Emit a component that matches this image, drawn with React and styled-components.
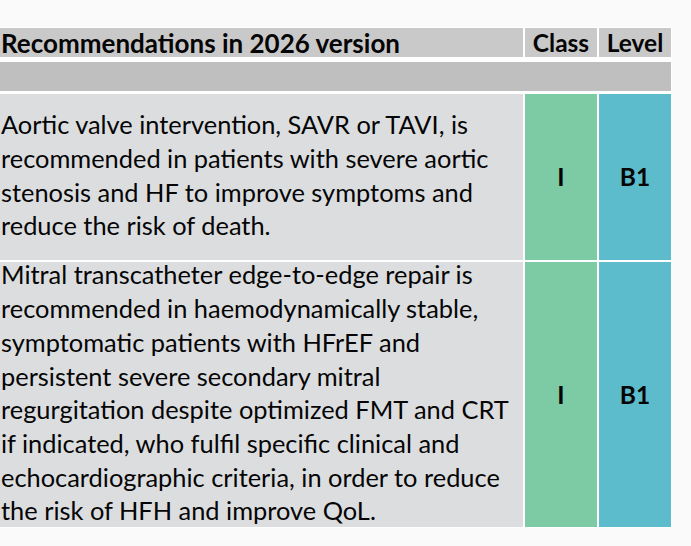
import React from 'react'
import styled, { createGlobalStyle } from 'styled-components'

const GlobalStyle = createGlobalStyle`
  html, body {
    margin: 0;
    padding: 0;
    background: #fafafa;
  }
  body {
    font-family: Lato, "Open Sans", "Liberation Sans", sans-serif;
    color: #050505;
  }
`

const rows = [
  {
    text: [
      'Aortic valve intervention, SAVR or TAVI, is',
      'recommended in patients with severe aortic',
      'stenosis and HF to improve symptoms and',
      'reduce the risk of death.',
    ],
    cls: 'I',
    level: 'B1',
    height: 165.5,
  },
  {
    text: [
      'Mitral transcatheter edge-to-edge repair is',
      'recommended in haemodynamically stable,',
      'symptomatic patients with HFrEF and',
      'persistent severe secondary mitral',
      'regurgitation despite optimized FMT and CRT',
      'if indicated, who fulfil specific clinical and',
      'echocardiographic criteria, in order to reduce',
      'the risk of HFH and improve QoL.',
    ],
    cls: 'I',
    level: 'B1',
    height: 265.5,
  },
]

export default function App(){
  return(
    <>
      <GlobalStyle />
      <Table>
        <Row $h={29}>
          <HeadCell $align='left'>Recommendations in 2026 version</HeadCell>
          <HeadCell>Class</HeadCell>
          <HeadCell>Level</HeadCell>
        </Row>
        <SectionRow $gap={5} />
        {rows.map((r, i) => (
          <Row key={i} $h={r.height} $gap={i === 0 ? 3 : 2}>
            <TextCell>
              {r.text.map((line, j) => <Line key={j}>{line}</Line>)}
            </TextCell>
            <GradeCell $bg='#7ccba4'>{r.cls}</GradeCell>
            <GradeCell $bg='#5cbccb'>{r.level}</GradeCell>
          </Row>
        ))}
      </Table>
    </>
  )
}

const Table = styled.div`
  margin-top: 27px;
  width: 671px;
  padding: 1px 1px 1px 0;
  background: #ffffff;
  display: flex;
  flex-direction: column;
`

const Row = styled.div`
  display: grid;
  grid-template-columns: 523px 72px 72px;
  grid-template-rows: minmax(0, 1fr);
  column-gap: 2px;
  height: ${p => p.$h}px;
  flex-shrink: 0;
  margin-top: ${p => p.$gap || 0}px;
`

const SectionRow = styled.div`
  height: 29px;
  margin-top: ${p => p.$gap}px;
  background: #bfbfbf;
`

const HeadCell = styled.div`
  background: #c9c9c9;
  font-weight: 700;
  font-size: ${p => p.$align === 'left' ? '26px' : '24.5px'};
  display: flex;
  align-items: center;
  justify-content: ${p => p.$align === 'left' ? 'flex-start' : 'center'};
  padding-left: ${p => p.$align === 'left' ? '1px' : '0'};
  white-space: nowrap;
  min-height: 0;
`

const TextCell = styled.div`
  background: #dcdddf;
  font-size: 25.4px;
  line-height: 33.7px;
  padding-left: 1px;
  display: flex;
  flex-direction: column;
  justify-content: center;
  padding-bottom: 2px;
  min-height: 0;
`

const Line = styled.span`
  display: block;
  white-space: nowrap;
`

const GradeCell = styled.div`
  background: ${p => p.$bg};
  font-weight: 700;
  font-size: 24.5px;
  display: flex;
  align-items: center;
  justify-content: center;
`
